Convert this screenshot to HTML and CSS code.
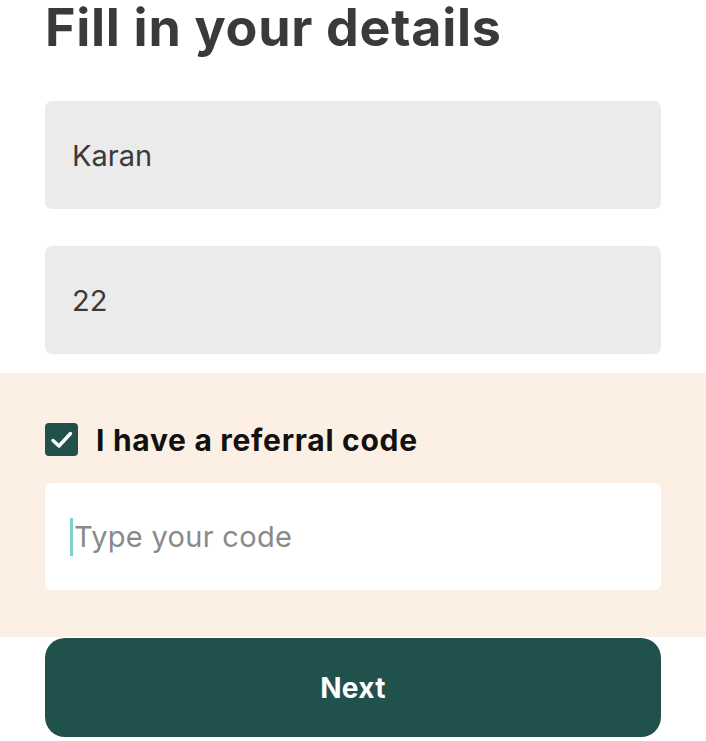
FILE: index.html
```html
<!DOCTYPE html>
<html lang="en">
<head>
<meta charset="utf-8">
<title>Fill in your details</title>
<link rel="stylesheet" href="styles.css">
</head>
<body>
<main class="page">
  <h1 class="title">Fill in your details</h1>
  <div class="fields">
    <div class="field field-grey"><span class="value">Karan</span></div>
    <div class="field field-grey"><span class="value">22</span></div>
  </div>
  <section class="referral">
    <label class="check-row">
      <span class="checkbox">
        <svg width="33" height="33" viewBox="0 0 33 33"><rect x="0" y="0" width="33" height="33" rx="4" fill="#22514c"/><path d="M8 17.5 L14 23 L25.5 10.5" fill="none" stroke="#ffffff" stroke-width="3.4" stroke-linecap="round" stroke-linejoin="round"/></svg>
      </span>
      <span class="check-label">I have a referral code</span>
    </label>
    <div class="field field-white"><span class="caret"></span><span class="placeholder">Type your code</span></div>
  </section>
  <div class="actions">
    <button class="next-btn" type="button">Next</button>
  </div>
</main>
</body>
</html>
```

FILE: styles.css
```css
html, body {
  margin: 0;
  padding: 0;
  background: #ffffff;
}
.page {
  width: 706px;
  font-family: "Inter", "Noto Sans", sans-serif;
}
.title {
  margin: 0;
  padding: 4px 45px 0;
  height: 101px;
  box-sizing: border-box;
  font-family: "Inter", sans-serif;
  font-weight: 700;
  font-size: 52px;
  line-height: 48px;
  color: #3a3a3a;
  letter-spacing: 0.7px;
}
.fields {
  display: flex;
  flex-direction: column;
  gap: 37px;
  padding: 0 45px;
}
.field {
  height: 108px;
  border-radius: 7px;
  display: flex;
  align-items: center;
  padding-left: 27px;
  box-sizing: border-box;
  width: 616px;
}
.field-grey {
  background: #ebebeb;
}
.value {
  font-size: 29px;
  color: #3a3a3a;
}
.referral {
  margin-top: 19px;
  background: #fcf0e4;
  padding: 50px 45px 47px;
  display: flex;
  flex-direction: column;
  gap: 27px;
}
.check-row {
  display: flex;
  align-items: center;
  gap: 18px;
  height: 33px;
}
.checkbox {
  display: flex;
  width: 33px;
  height: 33px;
}
.check-label {
  font-family: "Inter", sans-serif;
  font-weight: 700;
  font-size: 30px;
  color: #111111;
  letter-spacing: 0.7px;
}
.field-white {
  background: #ffffff;
  height: 107px;
  padding-left: 25px;
}
.caret {
  width: 3px;
  height: 38px;
  background: #7fcfcb;
  margin-right: 1px;
}
.placeholder {
  font-size: 29px;
  color: #8a8a8a;
  letter-spacing: 0.3px;
}
.actions {
  padding: 1px 45px 0;
}
.next-btn {
  display: block;
  width: 616px;
  height: 99px;
  border: none;
  border-radius: 20px;
  background: #20514c;
  color: #ffffff;
  font-family: "Inter", sans-serif;
  font-weight: 700;
  font-size: 28px;
  letter-spacing: 0.3px;
  cursor: pointer;
}
```
